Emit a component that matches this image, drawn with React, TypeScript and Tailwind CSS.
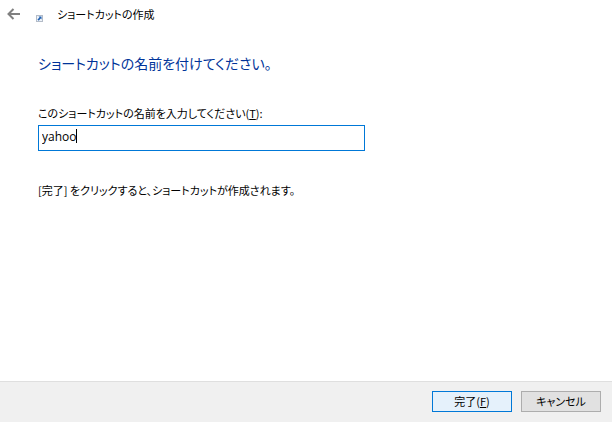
import React, { useState } from 'react';
import { clsx } from 'clsx';

interface DialogButtonProps {
  children: React.ReactNode;
  accessKey?: string;
  isDefault?: boolean;
}

function DialogButton({ children, accessKey, isDefault }: DialogButtonProps) {
  return (
    <button
      type="button"
      accessKey={accessKey}
      className={clsx(
        'flex h-[21px] w-20 items-center justify-center border pb-0.5 leading-4 whitespace-nowrap',
        isDefault ? 'border-[#0078d7] bg-[#e5f1fb]' : 'border-[#adadad] bg-[#e1e1e1]'
      )}
    >
      {children}
    </button>
  );
}

function BackIcon() {
  return (
    <svg width="14" height="12" viewBox="0 0 14 12" fill="none" stroke="#808080" strokeWidth="2" aria-hidden="true">
      <path d="M13 6H2M6.5 1L1.5 6l5 5" />
    </svg>
  );
}

function ShortcutIcon() {
  return (
    <svg width="7" height="7" viewBox="0 0 7 7" aria-hidden="true">
      <rect x="0.5" y="0.5" width="6" height="6" fill="#eef3f9" stroke="#b4bcc8" />
      <path d="M2.5 1.5h3v3l-.9-.9L2.8 5.8 1.4 4.6l2.1-2.1z" fill="#1f5fb0" />
    </svg>
  );
}

export default function App() {
  const [name, setName] = useState('yahoo');

  return (
    <div className="flex min-h-screen flex-col bg-white font-['Noto_Sans_CJK_JP',sans-serif] text-[11px] leading-4 text-black [font-feature-settings:'palt']">
      <header className="flex h-7 items-center pl-[7px]">
        <button type="button" aria-label="戻る">
          <BackIcon />
        </button>
        <span className="mt-2 ml-[15px]">
          <ShortcutIcon />
        </span>
        <span className="ml-[14px]">ショートカットの作成</span>
      </header>

      <main className="flex-1 px-[38px] pt-[23px]">
        <h1 className="text-[14px] leading-6 text-[#003399]">ショートカットの名前を付けてください。</h1>

        <label htmlFor="shortcut-name" className="mt-[30px] block">
          このショートカットの名前を入力してください(<u>T</u>):
        </label>
        <div className="relative mt-1 w-[61%]">
          <input
            id="shortcut-name"
            type="text"
            accessKey="t"
            value={name}
            onChange={(e) => setName(e.target.value)}
            className="block h-[26px] w-full border border-[#0078d7] bg-white px-[3px] pb-1 font-['Open_Sans',sans-serif] text-[12px] outline-none"
          />
          <span className="absolute top-[4px] left-[38px] h-[14px] w-px bg-black" />
        </div>

        <p className="mt-[31px]">[完了] をクリックすると、ショートカットが作成されます。</p>
      </main>

      <footer className="flex h-[41px] items-center justify-end gap-[9px] border-t border-[#dfdfdf] bg-[#f0f0f0] pr-[11px] pb-px">
        <DialogButton accessKey="f" isDefault>
          完了(<u>F</u>)
        </DialogButton>
        <DialogButton>キャンセル</DialogButton>
      </footer>
    </div>
  );
}
